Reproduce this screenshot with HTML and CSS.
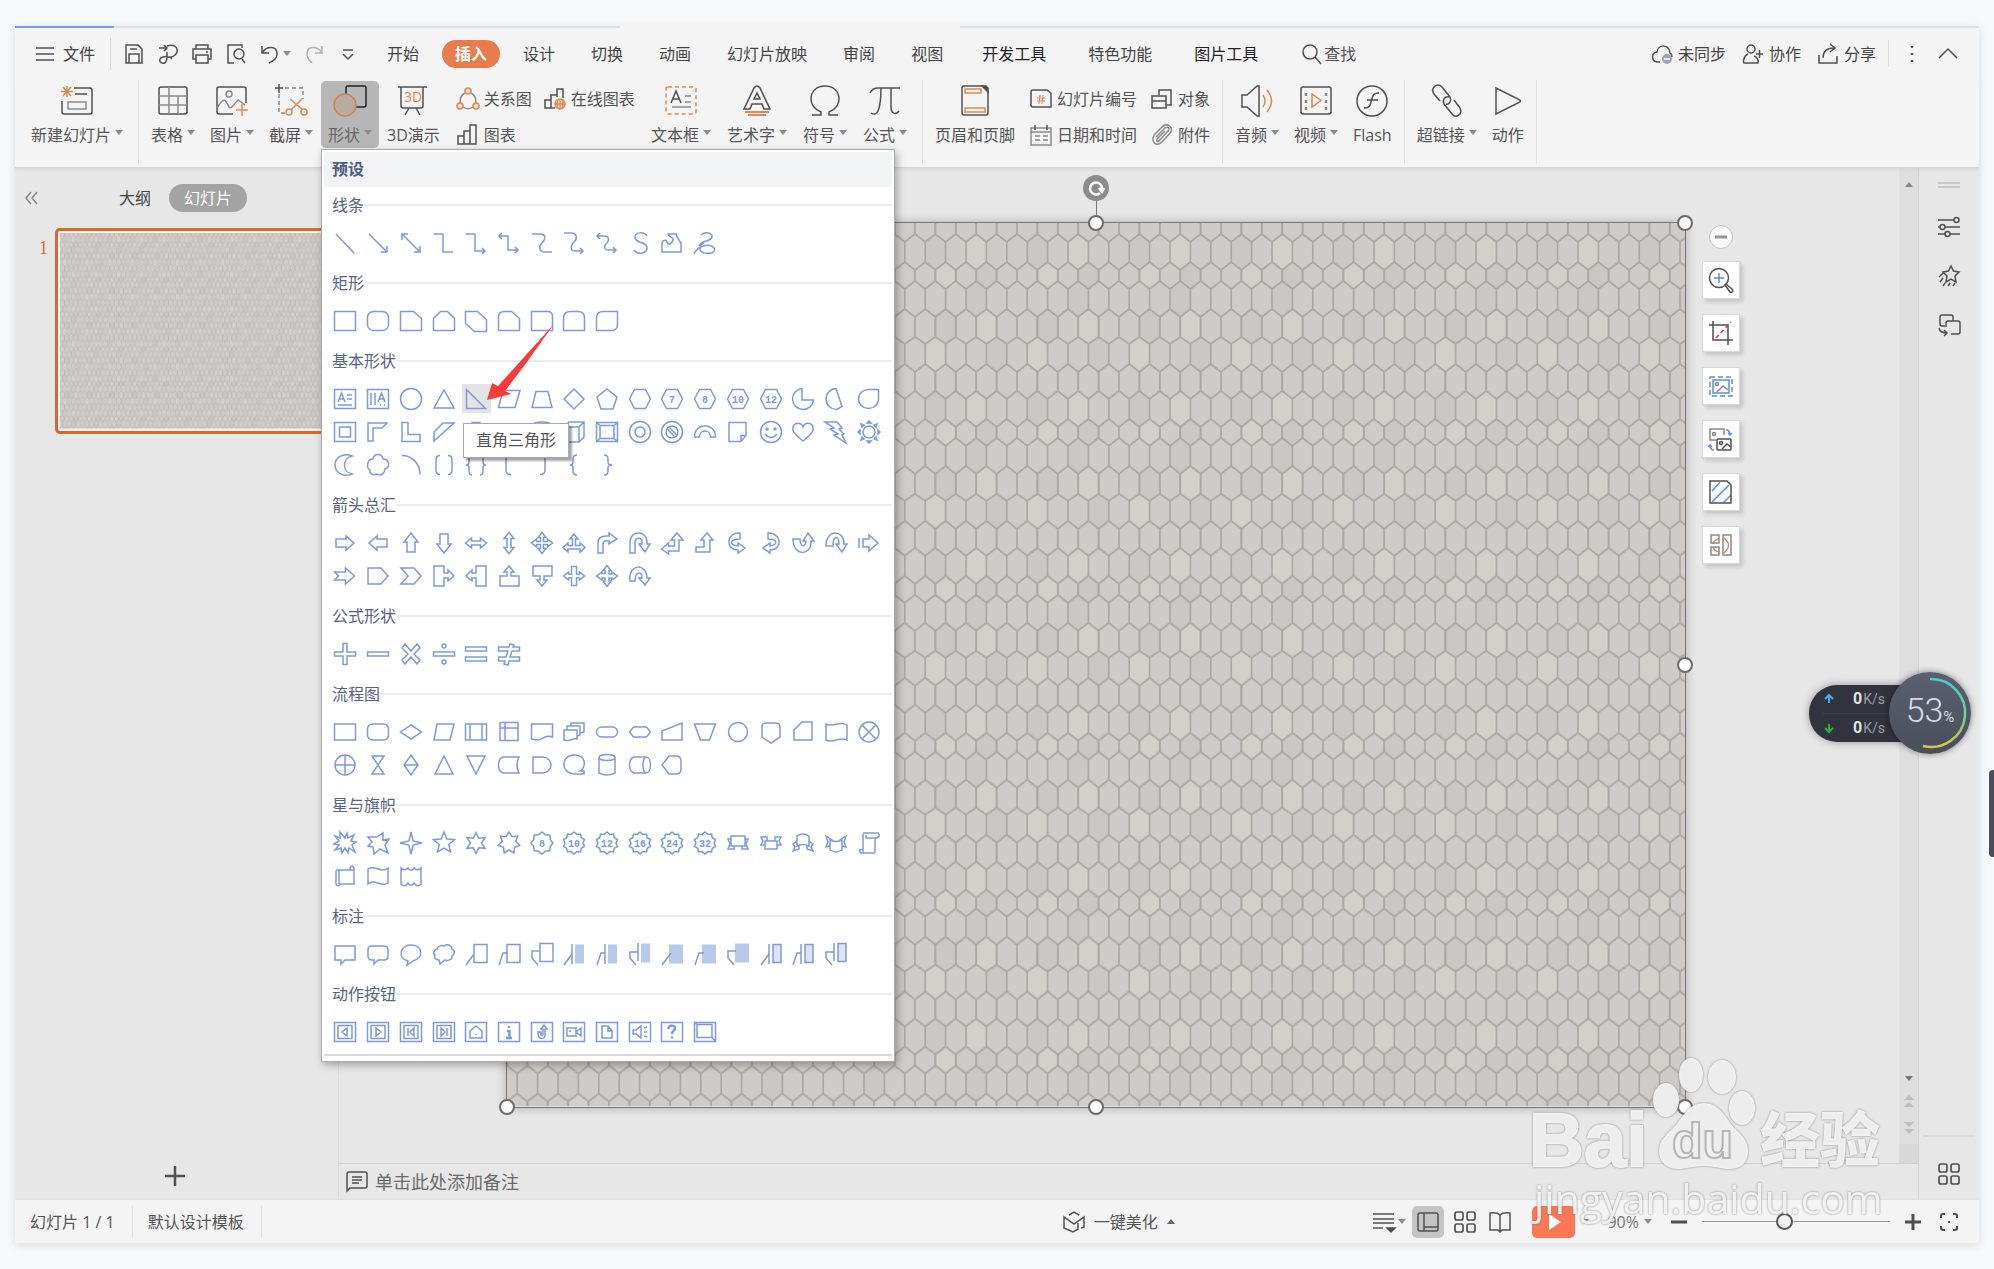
FILE: index.html
```html
<!DOCTYPE html>
<html lang="zh-CN">
<head>
<meta charset="utf-8">
<title>演示</title>
<link rel="stylesheet" href="styles.css">
</head>
<body>
<svg class="defs" aria-hidden="true">
  <defs>
    <pattern id="tiles" width="102" height="157" patternUnits="userSpaceOnUse">
      <rect width="102" height="157" fill="#cfcbc8"/>
      <path fill="#cbc7c4" d="M10.2 19l10.2-8 10.2 8v20l-10.2 8-10.2-8zM61.2 47l10.2-8 10.2 8v11l-10.2 8-10.2-8zM51 66l10.2-8 10.2 8v20l-10.2 8-10.2-8zM71.4 121l10.2-7 10.2 7v20l-10.2 8-10.2-8zM20.4 94l10.2-8 10.2 8v20l-10.2 7-10.2-7z"/>
      <path fill="#d3cfcb" d="M51 19l10.2-8 10.2 8v20l-10.2 8-10.2-8zM20.4 47l10.2-8 10.2 8v11l-10.2 8-10.2-8zM61.2 94l10.2-8 10.2 8v20l-10.2 7-10.2-7zM10.2 121l10.2-7 10.2 7v20l-10.2 8-10.2-8z"/>
      <g id="cells" fill="none" stroke="#aaa5a1" stroke-width="1.7">
        <path id="cell" d="M0 0v11l10.2 8v20L0 47v11l10.2 8v20L0 94v20l10.2 7v20L0 149v8M20.4 0v11l-10.2 8M10.2 39l10.2 8v11l-10.2 8M10.2 86l10.2 8v20l-10.2 7M10.2 141l10.2 8v8"/>
        <use href="#cell" x="20.4"/><use href="#cell" x="40.8"/><use href="#cell" x="61.2"/><use href="#cell" x="81.6"/>
      </g>
    </pattern>
    <symbol id="slide-art" viewBox="0 0 1178 884" preserveAspectRatio="none"><rect width="1178" height="884" fill="url(#tiles)"/></symbol>
    <symbol id="four" viewBox="0 0 24 24"><g fill="none" stroke="currentColor" stroke-width="1.7"><rect x="2" y="2" width="8" height="8" rx="2"/><rect x="14" y="2" width="8" height="8" rx="2"/><rect x="2" y="14" width="8" height="8" rx="2"/><rect x="14" y="14" width="8" height="8" rx="2"/></g></symbol>
  </defs>
</svg>

<div class="window">
  <div class="doc-tabs"><span class="doc-tab current"></span><span class="doc-tab"></span><span class="doc-gap"></span><span class="doc-rest"></span></div>

  <header class="menu-bar">
    <button class="file-menu"><svg class="i20" viewBox="0 0 20 20"><path d="M1 4h18M1 10h18M1 16h18"/></svg>文件</button>
    <div class="quick">
      <button><svg class="i22" viewBox="0 0 22 22"><path d="M3 2h12l4 4v14H3zM6 20v-9h10v9M7 6h7"/></svg></button>
      <button><svg class="i22" viewBox="0 0 22 22"><path d="M2 5h8M7 2l3 3-3 3M10 3c7-2 11 1 10 6-1 4-6 6-10 5v-5M10 14c0 5-2 7-5 6-4-1-2-6 1-6 3-1 8 0 9 2"/></svg></button>
      <button><svg class="i22" viewBox="0 0 22 22"><path d="M5 6V2h12v4M5 16H2V6h18v10h-3M5 12h12v8H5zM15 9h2"/></svg></button>
      <button><svg class="i22" viewBox="0 0 22 22"><path d="M9 20H3V2h14v3M17 16l3 4"/><circle cx="14" cy="11" r="5"/></svg></button>
      <button class="undo"><svg class="i22" viewBox="0 0 22 22"><path d="M3 3v7h7M3 10c4-7 15-8 15 1 0 5-4 7-8 9"/></svg><i class="caret"></i></button>
      <button class="faint"><svg class="i22" viewBox="0 0 22 22"><path d="M19 3v7h-7M19 10c-4-7-15-8-15 1 0 5 3 7 5 9"/></svg></button>
      <button><svg class="i22" viewBox="0 0 22 22"><path d="M6 7h10M6 11l5 5 5-5"/></svg></button>
    </div>
    <nav class="tabs">
      <a href="#">开始</a><a href="#" class="on">插入</a><a href="#">设计</a><a href="#">切换</a><a href="#">动画</a><a href="#">幻灯片放映</a><a href="#">审阅</a><a href="#">视图</a><a href="#" class="wide dark">开发工具</a><a href="#" class="wide">特色功能</a><a href="#" class="wide dark">图片工具</a>
    </nav>
    <button class="search"><svg class="i22" viewBox="0 0 22 22"><circle cx="9" cy="9" r="7"/><path d="M14 14l6 7"/></svg>查找</button>
    <div class="account">
      <button><svg class="i22" viewBox="0 0 22 22"><path d="M9 19H6c-6-1-6-9 0-10 1-8 12-8 13 1 2 1 2 2 2 4"/><circle cx="16" cy="16" r="5" fill="#9aa3b8" stroke="none"/><path d="M13 16h6" stroke="#fff"/></svg>未同步</button>
      <button><svg class="i22" viewBox="0 0 22 22"><circle cx="9" cy="6" r="4"/><path d="M6 11c-5 2-5 9-4 9h14c1-3-1-6-4-7M14 11h7M17.500 7v8"/></svg>协作</button>
      <button><svg class="i22" viewBox="0 0 22 22"><path d="M2 12v8h18v-7M6 15c0-7 4-10 11-10M13 1l5 4-5 4"/></svg>分享</button>
      <span class="bar"></span>
      <button class="dots"><svg class="i22" viewBox="0 0 22 22"><path d="M11 3v2M11 10v2M11 17v2" stroke-width="2.500"/></svg></button>
      <button><svg class="i22" viewBox="0 0 22 22"><path d="M2 15l9-9 9 9"/></svg></button>
    </div>
  </header>

  <div class="tools">
    <div class="group">
      <button class="big"><svg viewBox="0 0 32 32"><path d="M13 3h16q2 0 2 2v22q0 2-2 2H3q-2 0-2-2V16M14 9h12"/><path class="g" d="M7 17h18v7H7z"/><path class="o" d="M6 1v11M0 6.500h12M2 2l8 9M10 2l-8 9"/></svg><span>新建幻灯片<i class="caret"></i></span></button>
    </div>
    <div class="group">
      <button class="big"><svg viewBox="0 0 32 32"><rect x="2" y="2" width="28" height="27" rx="2"/><path class="g" d="M2 11h28M2 20h28M12 2v27M21 11v18"/></svg><span>表格<i class="caret"></i></span></button>
      <button class="big"><svg viewBox="0 0 32 32"><path d="M30 18V4q0-2-2-2H3q-2 0-2 2v23q0 2 2 2h14"/><path class="g" d="M1 23c8-14 9-6 12-1 3 3 6-5 9-7l7 5"/><circle class="g" cx="13" cy="9" r="3"/><path class="o" d="M26 19v12M20 25h12"/></svg><span>图片<i class="caret"></i></span></button>
      <button class="big"><svg viewBox="0 0 32 32"><path stroke-dasharray="4 3" class="g" d="M10 3h18v11M4 9v19h7"/><path d="M4-1v9M0 3h8"/><path class="o" d="M15 14l13 11M27 14L16 25"/><circle class="o" cx="14" cy="27" r="3"/><circle class="o" cx="29" cy="27" r="3"/></svg><span>截屏<i class="caret"></i></span></button>
      <div class="menu-anchor">
        <button class="big pressed"><svg viewBox="0 0 32 32"><rect x="12" y="1" width="20" height="21" rx="2" stroke="#222"/><circle cx="11" cy="20" r="11" stroke="#d5814c" fill="#b9aaa2"/></svg><span>形状<i class="caret"></i></span></button>
        <div class="gallery">
          <h2>预设</h2>
          <div id="gallery-groups"></div>
        </div>
      </div>
      <button class="big"><svg viewBox="0 0 32 32"><path d="M1 2h29M4 2v19q0 2 2 2h18q2 0 2-2V2M12 23l-4 7M19 23l4 7"/><text x="7" y="17" class="svg-3d">3D</text></svg><span>3D演示</span></button>
      <div class="small-grid charts">
        <button class="small"><svg class="i22" viewBox="0 0 22 22"><path class="g" d="M8 5C2 8 3 15 4 16M14 5c6 3 5 10 4 11M6 19c3 2 7 2 10 0"/><g class="o" fill="#f6dccb"><circle cx="11" cy="3" r="3"/><circle cx="3" cy="18" r="3"/><circle cx="19" cy="18" r="3"/></g></svg>关系图</button>
        <button class="small"><svg class="i22" viewBox="0 0 22 22"><path d="M1 20V12h6v8zM7 20V7h6M13 9V1h6v9M7 20h4"/><circle class="o" cx="16" cy="16" r="5"/><path class="o" d="M16 11v10M11 16h10M14 12q-2 4 0 8M18 12q2 4 0 8"/></svg>在线图表</button>
        <button class="small"><svg class="i22" viewBox="0 0 22 22"><path d="M1 20V12h6v8zM7 20V7h6v13zM13 20V1h6v19z"/></svg>图表</button>
      </div>
      <div class="cluster">
      <button class="big"><svg viewBox="0 0 32 32"><rect class="o" x="1" y="2" width="30" height="27" rx="2" stroke-dasharray="4 3"/><path d="M6 18l5-12 5 12M8 14h6"/><path class="g" d="M20 11h6M20 17h6M7 22h19"/></svg><span>文本框<i class="caret"></i></span></button>
      <button class="big"><svg viewBox="0 0 32 32"><path d="M3 24L13 3q3-4 6 0l10 21h-6l-2-5H11l-2 5zM16 8l-3 6h6z"/><path class="o" d="M4 27h24M7 30h18" stroke-width="2"/></svg><span>艺术字<i class="caret"></i></span></button>
      <button class="big"><svg viewBox="0 0 32 32"><path d="M3 30h9v-3C5 24 2 19 2 14 2 6 8 1 16 1s14 5 14 13c0 5-3 10-10 13v3h9"/></svg><span>符号<i class="caret"></i></span></button>
      <button class="big"><svg viewBox="0 0 32 32"><path d="M1 8c2-4 4-5 8-5h22M12 3c0 9 0 16-3 23-1 3-4 4-7 2M22 3v19c0 7 5 8 8 4"/></svg><span>公式<i class="caret"></i></span></button>
      </div>
    </div>
    <div class="group">
      <button class="big"><svg viewBox="0 0 32 32"><path d="M3 3q0-2 2-2h19l5 5v22q0 2-2 2H5q-2 0-2-2z"/><path d="M23 1l6 6v-4l-2-2z" fill="#444"/><path class="o" d="M6 4h16v4H6zM6 23h20v4H6z"/></svg><span>页眉和页脚</span></button>
      <div class="small-grid">
        <button class="small"><svg class="i22" viewBox="0 0 22 22"><path d="M1 4q0-2 2-2h14l4 3v14H3q-2 0-2-2z"/><path class="o" stroke-width="1" d="M7 10h8M7 13h8M10 7l-1 9M13 7l-1 9"/></svg>幻灯片编号</button>
        <button class="small"><svg class="i22" viewBox="0 0 22 22"><path d="M8 7V2h12v15h-5M1 8h14v12H1zM1 13h14"/></svg>对象</button>
        <button class="small"><svg class="i22" viewBox="0 0 22 22"><path class="g" d="M1 4h20v17H1zM1 8h20M5 12h5M13 12h5M5 16h5M13 16h5"/><path d="M5 1v5M17 1v5"/></svg>日期和时间</button>
        <button class="small"><svg class="i22" viewBox="0 0 22 22"><path class="g" d="M5 13l9-9c3-2 5 0 3 3L8 17c-2 1-3 0-2-2l8-8M3 11l9-9c5-3 10 1 8 6l-9 10c-6 5-11 1-8-7"/></svg>附件</button>
      </div>
    </div>
    <div class="group">
      <button class="big"><svg viewBox="0 0 32 32"><path d="M1 10h5L16 1h2v30h-2L6 22H1z"/><path class="o" d="M22 10q4 6 0 12M26 5q9 11 0 22"/></svg><span>音频<i class="caret"></i></span></button>
      <button class="big"><svg viewBox="0 0 32 32"><rect x="1" y="2" width="30" height="27" rx="2"/><path class="g" stroke-width="2.500" stroke-dasharray="3 4" d="M6 8v18M26 8v18"/><path class="o" d="M12 9l9 6.500-9 6.500z"/></svg><span>视频<i class="caret"></i></span></button>
      <button class="big"><svg viewBox="0 0 32 32"><circle cx="16" cy="16" r="15"/><path d="M23 8c-6 0-6 2-8 9-1 5-3 6-7 6M11 15h11"/></svg><span>Flash</span></button>
    </div>
    <div class="group">
      <button class="big"><svg viewBox="0 0 32 32"><path d="M9 16L3 9c-4-6 3-12 8-7l8 10c2 4-1 8-4 7M23 15l6 8c3 6-4 11-8 6l-8-10c-2-4 1-8 5-7"/></svg><span>超链接<i class="caret"></i></span></button>
      <button class="big"><svg viewBox="0 0 32 32"><path d="M4 3v26l24-12q1-1 0-2z"/></svg><span>动作</span></button>
    </div>
  </div>

  <div class="work">
    <aside class="slides">
      <div class="slides-head">
        <button class="fold"><svg class="i14" viewBox="0 0 14 14"><path d="M7 1L2 7l5 6M13 1L8 7l5 6"/></svg></button>
        <button class="outline">大纲</button>
        <button class="thumbs">幻灯片</button>
      </div>
      <div class="thumb-row">
        <span class="num">1</span>
        <div class="thumb"><svg viewBox="0 0 1178 884" preserveAspectRatio="none"><use href="#slide-art" width="1178" height="884"/></svg></div>
      </div>
      <button class="add"><svg class="i22" viewBox="0 0 22 22"><path d="M11 1v20M1 11h20" stroke-width="2.500"/></svg></button>
    </aside>

    <main class="main">
      <div class="stage-row">
        <div class="stage">
          <div class="slide">
            <svg class="art" viewBox="0 0 1178 884" preserveAspectRatio="none"><use href="#slide-art" width="1178" height="884"/></svg>
            <i class="stem"></i>
            <i class="spin"><svg class="i18" viewBox="0 0 18 18"><path d="M13 14A6 6 0 1 1 15 9v3M12 9l3 4 2-4" stroke="#fff" stroke-width="2.500"/></svg></i>
            <i class="knob tl"></i><i class="knob tc"></i><i class="knob tr"></i><i class="knob mr"></i><i class="knob bl"></i><i class="knob bc"></i><i class="knob br"></i>
            <div class="pic-tools">
              <button class="round"><svg class="i14" viewBox="0 0 14 14"><path d="M1 7h12" stroke="#999" stroke-width="3"/></svg></button>
              <button><svg class="i26" viewBox="0 0 26 26"><circle cx="11" cy="11" r="9.500"/><path d="M17 18l1-1 7 6q0 3-3 2z"/><path class="b" d="M6 11h10M11 6v10"/></svg></button>
              <button><svg class="i26" viewBox="0 0 26 26"><path d="M1 5h19v20M5 1v19h20"/><path d="M8 18L23 2" stroke="#e33" stroke-dasharray="4 3"/></svg></button>
              <button><svg class="i26" viewBox="0 0 26 26"><rect class="b" x="2" y="4" width="22" height="19" stroke-dasharray="5 3"/><rect class="b" x="5" y="7" width="16" height="13"/><circle class="g" cx="9" cy="11" r="1.500"/><path class="g" d="M9 19l6-6 5 4"/></svg></button>
              <button><svg class="i26" viewBox="0 0 26 26"><path class="g" d="M8 14H2V3h14v6"/><circle class="g" cx="6" cy="8" r="1.500"/><rect x="9" y="13" width="14" height="11" rx="1"/><circle cx="13" cy="17" r="1.500"/><path d="M14 23l5-5 4 3"/><path class="b" d="M18 4q4 0 4 5m-2-2l2 2 2-2M6 24q-4 0-4-5m-2 2l2-2 2 2"/></svg></button>
              <button><svg class="i26" viewBox="0 0 26 26"><path class="b" d="M4 12L12 3M4 23L21 6M15 24l8-8"/><path d="M2 2h17l4 4v18H2z"/></svg></button>
              <button><svg class="i26" viewBox="0 0 26 26"><path class="o" d="M11 7q-5 1-6 5M11 20q-5-1-6-5M16 6q9 7 0 15"/><path class="g" d="M3 3h8v8H3zM3 15h8v8H3zM15 3h8v20h-8z"/></svg></button>
            </div>
          </div>
        </div>
        <div class="scroll"><i class="up"></i><span class="scroll-foot"><i class="down"></i><svg class="i14" viewBox="0 0 14 14"><path d="M2 6l5-5 5 5zM2 13l5-5 5 5z"/></svg><svg class="i14" viewBox="0 0 14 14"><path d="M2 1l5 5 5-5zM2 8l5 5 5-5z"/></svg></span><span class="corner"></span></div>
      </div>
      <label class="notes"><svg class="i22" viewBox="0 0 22 22"><path d="M1 20V3q0-2 2-2h16q2 0 2 2v12q0 2-2 2H4zM6 6h10M6 9h10M6 12h7"/></svg><input type="text" placeholder="单击此处添加备注"></label>
    </main>

    <aside class="side">
      <i class="grip"></i>
      <button><svg class="i22" viewBox="0 0 22 22"><path d="M0 4h16M7 11h15M0 11h2M0 18h7M12 18h10"/><circle cx="18.500" cy="4" r="2.500"/><circle cx="4.500" cy="11" r="2.500"/><circle cx="9.500" cy="18" r="2.500"/></svg></button>
      <button><svg class="i22" viewBox="0 0 22 22"><path d="M13 1l2.500 5 5.500 1-4 4 1 6-5-3-5 3 1-6-4-4 5.500-1zM5 8l-4 4M5 13l-3 4M7 18l-2 3M12 18l-2 3M17 18l-2 3"/></svg></button>
      <button><svg class="i22" viewBox="0 0 22 22"><path d="M7 12H4q-2 0-2-2V3q0-2 2-2h9q2 0 2 2v4M8 9q0-2 2-2h10q2 0 2 2v9q0 2-2 2h-7M8 9v4M1 14q1 5 8 5m-3-3l3 3-3 3"/></svg></button>
      <button class="apps"><svg class="i24"><use href="#four"/></svg></button>
    </aside>
  </div>

  <footer class="status">
    <span class="cell">幻灯片 1 / 1</span><span class="cell">默认设计模板</span>
    <button class="beautify"><svg class="i22" viewBox="0 0 22 22"><path d="M6 4l5-3 5 3M18 17l3-1V6l-10 7L1 6v11l9 4 5-3v-6"/></svg>一键美化<i class="caret flip"></i></button>
    <div class="views">
      <button class="remarks"><svg class="i22" viewBox="0 0 22 22"><path d="M0 3h21M0 8h21M0 12h21M0 17h10"/><path d="M14 17h8l-4 4z" fill="#444"/></svg><i class="caret"></i></button>
      <button class="picked"><svg class="i22" viewBox="0 0 22 22"><rect x="1" y="2" width="20" height="18" rx="2"/><path d="M7 2v18M7 16h14"/></svg></button>
      <button><svg class="i24"><use href="#four"/></svg></button>
      <button class="reading"><svg class="i22" viewBox="0 0 22 22"><path d="M11 4v17M11 4Q8 1 1 2v17h8l2 2 2-2h8V2q-7-1-10 2"/></svg></button>
      <button class="play"><svg class="i18" viewBox="0 0 18 18"><path d="M4 1v16l12-8z" fill="#fff" stroke="none"/></svg></button>
      <i class="caret play-more"></i>
      <button class="zoom">90%<i class="caret"></i></button>
      <button><svg class="i18" viewBox="0 0 18 18"><path d="M1 9h16" stroke-width="3"/></svg></button>
      <input type="range" min="0" max="100" value="43" aria-label="缩放">
      <button><svg class="i18" viewBox="0 0 18 18"><path d="M1 9h16M9 1v16" stroke-width="3"/></svg></button>
      <button class="fit"><svg class="i18" viewBox="0 0 18 18"><path d="M1 5V3q0-2 2-2h2M13 1h2q2 0 2 2v2M17 13v2q0 2-2 2h-2M5 17H3q-2 0-2-2v-2M8 9h2" stroke-width="2"/></svg></button>
    </div>
  </footer>
</div>

<div class="meter">
  <div class="rates">
    <p><svg class="i14" viewBox="0 0 14 14"><path d="M7 11V3M3 7l4-4 4 4" stroke="#3fb0f0" stroke-width="2"/></svg><b>0</b>K/s</p>
    <p><svg class="i14" viewBox="0 0 14 14"><path d="M7 3v8M3 7l4 4 4-4" stroke="#2fae3c" stroke-width="2"/></svg><b>0</b>K/s</p>
  </div>
  <div class="dial">
    <svg viewBox="0 0 82 82"><defs><linearGradient id="arc" x2="0" y2="1"><stop offset="0" stop-color="#45cfd0"/><stop offset=".6" stop-color="#7ad08c"/><stop offset="1" stop-color="#d6c84a"/></linearGradient></defs><path d="M41 7a34 34 0 1 1-7 67" stroke="url(#arc)" stroke-width="2.500"/></svg>
    <span class="pct">53<small>%</small></span>
  </div>
</div>
<i class="edge-tab"></i>

<svg class="watermark" viewBox="0 0 370 180">
  <g class="wm-fill">
    <text x="4" y="116" class="wm-latin">Bai</text>
    <ellipse cx="141" cy="50" rx="13" ry="17"/><ellipse cx="166" cy="25" rx="12" ry="17"/><ellipse cx="197" cy="27" rx="14" ry="17"/><ellipse cx="217" cy="58" rx="13" ry="17"/>
    <path d="M179 53c13 0 20 11 27 21 8 10 17 14 17 27 0 14-10 19-22 18-8-1-13-3-22-3s-15 2-23 3c-12 1-22-5-22-18 0-12 9-17 18-27 7-10 14-21 27-21z"/>
    <text x="235" y="112" class="wm-cjk">经验</text>
    <text x="9" y="164" class="wm-url">jingyan.baidu.com</text>
  </g>
  <text x="147" y="108" class="wm-du">du</text>
</svg>
<script src="gallery.js"></script>
</body>
</html>
```
FILE: gallery.js
```js
// Shape gallery: each entry is either SVG path data or ready SVG markup on a 24x24 grid.
const star = (n, outer, inner) => {
  let d = '';
  for (let i = 0; i < n * 2; i++) {
    const r = i % 2 ? inner : outer, a = Math.PI * i / n - Math.PI / 2;
    d += (i ? 'L' : 'M') + (12 + r * Math.cos(a)).toFixed(1) + ' ' + (12 + r * Math.sin(a)).toFixed(1);
  }
  return d + 'z';
};
const path = d => `<path d="${d}"/>`;
const num = (shape, t) => path(shape) + `<text x="12" y="16">${t}</text>`;
const HEX = 'M1.5 12l5-9.500h11l5 9.500-5 9.500h-11z';
const FRAME = 'M1.5 2.500h21v19h-21z';
const BEVEL = FRAME + 'M5 5.500h14v13H5z';

const groups = [
  ['线条', [
    'M3 3l18 19', 'M3 3l18 18m0-6v6h-6', 'M3 3l18 18m0-6v6h-6M3 9V3h6', 'M2 3h9v18h10',
    'M2 3h9v17h10m-3-3l3 3-3 3', 'M2 5h9v14h10m-3-3l3 3-3 3M5 2L2 5l3 3',
    'M2 3h8c7 0 5 6 2 9-3 2-4 9 3 9h7', 'M2 2h7c7 0 6 7 3 9-3 3-5 9 2 9h7m-3-3l3 3-3 3',
    'M2 5h7c6 0 5 5 3 7-3 2-4 7 2 7h7m-3-3l3 3-3 3M5 2L2 5l3 3',
    'M19 5c-3-5-13-4-12 2 1 5 11 4 12 9 1 6-9 9-13 3',
    'M2 21V12c1-3 4-4 5-1 1 4 5 2 6-2 1-3-4-2-5-6h8c1 4 3 6 5 9v9z',
    'M8 4c5-4 12-2 11 2-1 5-11 3-13 9M1 23c4-9 16-11 20-6 2 5-4 6-10 5-6-2-5-8 0-10']],
  ['矩形', [
    FRAME, '<rect x="1.500" y="2.500" width="21" height="19" rx="6"/>',
    'M1.5 2.500h13l8 7v12h-21z', 'M1.5 21.500v-12l7-7h7l7 7v12z', 'M1.5 2.500h12l9 8v12h-12l-9-8z',
    'M1.5 21.500V8q0-5.500 6-5.500h7l8 7v12z', 'M1.5 2.500h16q5 0 5 5v14h-21z',
    'M1.5 21.500V9q0-6.500 7-6.500h7q7 0 7 6.500v12.500z', 'M1.5 21.500V9q0-6.500 7-6.500h14V15q0 6.500-6 6.500z']],
  ['基本形状', [
    FRAME + 'M5 15l3.500-9 3.500 9M6 12h5M14 8h5M14 12h5M5 18h14', FRAME + 'M5 6v12M9 6v12M12 15l3.500-9 3.500 9M13 12h5M14 18h1M18 18h1',
    '<circle cx="12" cy="12" r="10.500"/>', 'M12 3l10 18H2z', 'M2.5 2.500v19h19z', 'M6 3.500h17l-5 17H1.500z',
    'M6 4.500h12l4 16H2z', 'M12 2l10 10-10 10L2 12z', 'M12 2l10 8-4 12H6L2 10z', HEX,
    num(HEX, '7'), num(HEX, '8'), num(HEX, '10'), num(HEX, '12'),
    'M11 1.500a10.500 10.500 0 1 0 11.500 11.500H11z', 'M12 1.500a10.500 10.500 0 0 0 1 21l5-3z', 'M21.5 2.500H12a10 9.500 0 1 0 9.500 9.500z',
    FRAME + 'M6.500 7h11v10h-11z', 'M2 21V3h19l-5 5H7v13z', 'M3 2.500h6v12h12v7H3z', 'M2 21v-9l9-9h11z',
    'M8 2.500h8v5h5v9h-5v5H8v-5H3v-9h5z', 'M3 4h18v16H3z', '<ellipse cx="12" cy="5" rx="9" ry="3"/><path d="M3 5v14q9 5 18 0V5"/>',
    'M2 7l5-5h15v15l-5 5H2zM2 7h15v15M17 7l5-5', BEVEL + 'M1.5 2.500l3.500 3M22.500 2.500l-3.500 3M1.500 21.500l3.500-3M22.500 21.500l-3.500-3',
    '<circle cx="12" cy="12" r="10.500"/><circle cx="12" cy="12" r="5"/>', '<circle cx="12" cy="12" r="10.500"/><circle cx="12" cy="12" r="6"/><path d="M7 9l8 8M9 7l8 8"/>',
    'M1.5 17C1.500 2 22.500 2 22.500 17h-5c0-8-11-8-11 0z', 'M3 2.500h17v13l-5 6H3zM20 15.500h-5v6',
    '<circle cx="12" cy="12" r="10.500"/><circle cx="8" cy="9" r="1"/><circle cx="16" cy="9" r="1"/><path d="M6 14q6 7 12 0"/>',
    'M12 21C2 13 1 10 2 7c2-5 8-5 10 0 2-5 8-5 10 0 1 3 0 6-10 14z', 'M1 2h12l5 6-3 1 5 5-2 1 4 8-12-8 4-1-8-5 4-1z',
    '<circle cx="12" cy="12" r="6"/><path d="M12 1l2 2h-4zM12 23l2-2h-4zM1 12l2-2v4zM23 12l-2-2v4zM4 4l3 1-2 2zM20 4l-3 1 2 2zM4 20l3-1-2-2zM20 20l-3-1 2-2z"/>',
    'M19 3C10-1 2 5 2 12s8 13 17 9C9 19 9 5 19 3z', 'M7 6c1-6 9-6 10 0 7 0 7 9 2 10-1 6-5 7-8 5-5 2-8-1-7-4C0 15 1 6 7 6z',
    'M3 2.500c10 0 18 8 18 19', 'M8 2.500Q4 2.500 4 7v10q0 4.500 4 4.500M16 2.500q4 0 4 4.500v10q0 4.500-4 4.500',
    'M8 2Q5 2 5 6v3q0 3-3 3 3 0 3 3v3q0 4 3 4M16 2q3 0 3 4v3q0 3 3 3-3 0-3 3v3q0 4-3 4', 'M14 2.500Q9 2.500 9 7v10q0 4.500 5 4.500',
    'M10 2.500q5 0 5 4.500v10q0 4.500-5 4.500', 'M15 2q-4 0-4 4v3q0 3-3 3 3 0 3 3v3q0 4 4 4', 'M9 2q4 0 4 4v3q0 3 4 3-4 0-4 3v3q0 4-4 4']],
  ['箭头总汇', [
    'M3 8h10V5l8 7-8 7v-3H3z', 'M21 8H11V5l-8 7 8 7v-3h10z', 'M8 21V11H5l7-9 7 9h-3v10z', 'M8 3v10H5l7 9 7-9h-3V3z',
    'M1.500 12l6-5v3h9V7l6 5-6 5v-3h-9v3z', 'M12 1.500l-5 6h3v9H7l5 6 5-6h-3v-9h3z',
    'M12 1.500l-4 5h2.500v4H6.500V8l-5 4 5 4v-2.500h4v4H8l4 5 4-5h-2.500v-4h4V16l5-4-5-4v2.500h-4v-4H16z',
    'M12 3L8 8h2.500v6.500H6V12l-5 4.500L6 21v-3h12v3l5-4.500L18 12v2.500h-4.500V8H16z',
    'M3 22V12q0-7 8-7h3V2l8 6-8 5v-3h-3q-3 0-3 3v9z', 'M2 22V11C2-1 19-1 19 11v2h3l-5 8-6-8h3v-2c0-5-7-5-7 0v11z',
    'M1.500 18l7-6v3h6V9H11l6-7 6 7h-4v11H8.500v3z', 'M3 21v-5h8V9H8l6-7 6 7h-3v12z',
    'M14 2C0 1-1 19 12 19v3l7-5-7-5v3C2 14 4 8 14 8zM14 8V2', 'M9 2c14 0 15 17 2 17v3l-7-5 7-5v3c8-1 8-7-2-7zM9 8V2',
    'M2 8c0 18 19 17 18 2h3l-6-8-5 8h3c0 6-6 7-6-2zM2 8h7', 'M2 15C2-2 20-2 20 13h3l-5 8-6-8h3c0-9-6-9-6 2zM2 15h7',
    'M2 7v10M6 8v8h6v4l9-8-9-8v4z', 'M1.500 8h11V4l9 8-9 8v-4h-11l4-4z', 'M2 4h13l7 8-7 8H2z', 'M2 4h13l7 8-7 8H2l7-8z',
    'M2 2h10v7h4V6l6 6-6 5v-3h-4v8H2z', 'M22 2H12v7H8V6l-6 6 6 5v-3h4v8h10z', 'M3 22V12h7V8H7l5-6 5 6h-3v4h8v10z', 'M3 2v10h7v4H7l5 6 5-6h-3v-4h8V2z',
    'M1.500 12l5-4v2h3V2.500h5V10h3V8l5 4-5 4v-2h-3v7.500h-5V14h-3v2z',
    'M12 1.500l-4 5h2v3H7V8l-5.500 4L7 16v-2h3v3H8l4 5.500 4-5.500h-2v-3h3v2l5.500-4L17 8v2h-3V6.500h2z',
    'M2 17C0-1 19-1 19 14h3l-5 7-6-7h3c0-8-7-6-7 3z']],
  ['公式形状', [
    'M10 1.500h4V10h8.500v4H14v8.500h-4V14H1.500v-4H10z', 'M1.500 10h21v4h-21z', 'M6 2l6 7 6-7 3 4-6 6 6 6-3 4-6-7-6 7-3-4 6-6-6-6z',
    '<path d="M1.500 10h21v4h-21z"/><circle cx="12" cy="4" r="2"/><circle cx="12" cy="20" r="2"/>', 'M1.500 5h21v4h-21zM1.500 15h21v4h-21z',
    'M1.500 5H12l1-3 4 1-1 2h6.500v4H15l-2 6h9.500v4H12l-1 4-4-1 1-3H1.500v-4H9l2-6H1.500z']],
  ['流程图', [
    'M1.500 4h21v16h-21z', '<rect x="1.500" y="4" width="21" height="16" rx="5"/>', 'M1.500 12L12 5l10.500 7L12 19z', 'M5 4h17l-4 16H2z',
    'M1.500 4h21v16h-21zM6 4v16M18 4v16', 'M3 2.500h18v18H3zM8 2.500v18M3 8h18', 'M1.500 4h21v13c-8-3-10 3-14 3-3 0-5 0-7-1z',
    'M2 10h13v9c-6-1-6 3-13 1zM5 10V6h13v9l-3 1M9 6V3h13v9l-4 1', '<rect x="1.500" y="7" width="21" height="10" rx="5"/>',
    'M1.500 12l4-5h13l4 5-4 5h-13z', 'M2 11l20-8v17H2z', 'M1.500 4h21l-6 16h-9z', '<circle cx="12" cy="12" r="9.500"/>',
    'M3 17V7q0-4 4-4h10q4 0 4 4v10l-9 6z', 'M3 10l8-8h10v18H3z', 'M2 4c7 4 14-4 21 1v15c-7-4-14 4-21 0z',
    '<circle cx="12" cy="12" r="10"/><path d="M5 5l14 14M19 5L5 19"/>', '<circle cx="12" cy="12" r="10"/><path d="M12 2v20M2 12h20"/>',
    'M6 3h12L6 21h12z', 'M12 2l7 10-7 10-7-10zM5 12h14', 'M12 3l9 18H3z', 'M12 21l9-18H3z', 'M6 4h16q-4 8 0 16H6C0 18 0 6 6 4z',
    'M3 4h9c12 0 12 16 0 16H3z', 'M22 21H12C-2 20-1 2 12 2s12 12 6 16h4z',
    '<ellipse cx="12" cy="4.500" rx="8" ry="3"/><path d="M4 4.500V20q8 4 16 0V4.500"/>', 'M18 4H6C0 6 0 18 6 20h12M18 4c6 0 6 16 0 16-4-2-4-14 0-16z',
    'M2 12l7-9h7q5 0 5 5v8q0 5-5 5H9z']],
  ['星与旗帜', [
    'M12 7l2-5 1 5 6-3-3 6 5 1-4 3 3 7-6-4-1 5-3-5-3 5-1-5-6 2 4-5-5-1 5-3-4-5 5 2V1z', 'M11 6l6-4 0 7 6-1-4 6 3 8-8-4-6 5-1-7-5-1 4-4-4-5 7 0z', star(4, 11, 3), star(5, 11, 5), star(6, 10.500, 5.500), star(7, 11, 7),
    num(star(8, 11, 9), '8'), num(star(10, 11, 9), '10'), num(star(10, 11, 9), '12'), num(star(10, 11, 9), '16'), num(star(10, 11, 9), '24'), num(star(10, 11, 9), '32'),
    'M5 5h14v10H5zM5 8H2l2 5-2 5h6v-3M19 8h3l-2 5 2 5h-6v-3', 'M6 10h12v8H6zM6 14H2l2-4-2-4h6v4M18 14h4l-2-4 2-4h-6v4',
    'M6 5q6-4 12 0v10q-6-3-12 0zM6 10l-4 3 2 3-2 4 6-2v-3M18 10l4 3-2 3 2 4-6-2v-3', 'M6 9q6 3 12 0v10q-6 4-12 0zM6 15l-4 1 2-5-2-6 6 4v1M18 15l4 1-2-5 2-6-6 4v1',
    'M6 18V4q0-3 3-2h12q3 3-1 5h-2v13q0 2-2 2H4q-4-3 2-4M18 7H9V4M6 18v4', 'M6 6h11V4q2-4 4 0v16H7q-2 4-4 0V8q0-3 3-2v14M21 6h-4',
    'M2 5c7-5 13 5 20-1v15c-7 5-13-5-20 1z', 'M2 4c3 3 5 2 7 0 2 3 4 3 6 0 2 2 4 3 7 0v16c-3 3-5 2-7-1-2 3-4 3-6 0-2 3-4 4-7 1z']],
  ['标注', [
    'M2 4h20v14H12l-4 4v-4H2z', 'M6 4h12q4 0 4 4v6q0 4-4 4h-6l-4 4v-4H6q-4 0-4-4V8q0-4 4-4z', 'M9 19C-2 16 1 3 12 3s14 12 2 16l-6 4z',
    'M5 7c1-4 6-4 7-3 4-3 8 0 8 3 4 2 2 6 0 7 1 4-5 5-7 4l-5 4-1-4c-4 0-5-3-4-5-3-2 0-6 2-6z',
    'M10 2.500h13v18H10zM2 23l8-11', 'M10 2.500h13v18H10zM2 23l4-12h4', 'M10 1.500h13v18H10zM10 9H2v7l6 7',
    '<path class="tint" d="M13 2.500h9v19h-9z"/><path d="M10 2v20M2 23l8-11"/>', '<path class="tint" d="M13 2.500h9v19h-9z"/><path d="M10 2v20M2 23l4-12h4"/>', '<path class="tint" d="M13 1.500h9v19h-9z"/><path d="M10 1v18M10 10H2v6l6 7"/>',
    '<path class="tint" d="M9 2.500h14v19H9z"/><path d="M2 23l9-12"/>', '<path class="tint" d="M9 2.500h14v19H9z"/><path d="M2 23l4-12h5"/>', '<path class="tint" d="M9 1.500h14v19H9z"/><path d="M10 9H2v7l6 7"/>',
    '<path class="pale" d="M14 2.500h8v18h-8z"/><path d="M10 2v20M2 23l8-11"/>', '<path class="pale" d="M14 2.500h8v18h-8z"/><path d="M10 2v20M2 23l4-12h4"/>', '<path class="pale" d="M14 1.500h8v18h-8z"/><path d="M10 1v18M10 10H2v6l6 7"/>']],
  ['动作按钮', [
    BEVEL + 'M14 8v8l-5-4z', BEVEL + 'M10 8v8l5-4z', BEVEL + 'M9 8v8M15 8v8l-4-4z', BEVEL + 'M15 8v8M9 8v8l4-4z',
    FRAME + 'M12 6l6 5v7H6v-7zM12 14v1', '<path d="M1.500 2.500h21v19h-21z"/><path stroke-width="2.500" d="M12 6v2M10 11h2.500v6M9 18h6"/>', FRAME + 'M8 12v2c0 6 8 6 7 0V9h2l-3-4-3 4h2v5c0 2-2 2-2 0v-2z',
    FRAME + 'M5 8h9v8H5zM14 12l5-4v8zM7 11h2', FRAME + 'M7 6h6l4 5v7H7zM13 6v5h4', FRAME + 'M5 10h3l5-4v12l-5-4H5zM16 8l3-1M16 12h3M16 16l3 1',
    '<path d="M1.500 2.500h21v19h-21z"/><path stroke-width="2.500" d="M8.500 9c0-5 8-4 6.500 0-1 2-3 2-3 5M12 16.500v2"/>', FRAME + 'M4 4.500h15v13H4zM1.500 2.500L4 4.500M22.500 21.500l-3.500-4']]
];

const hint = '<svg class="pointer" viewBox="0 0 70 78"><path d="M68 1L12 63 6 60 1 77l24-6-6-3 22-29z"/></svg><span class="tip">直角三角形</span>';

document.getElementById('gallery-groups').innerHTML = groups.map(([name, items]) =>
  `<section><h3>${name}</h3><div class="shapes">` + items.map((s, i) => {
    const hot = name === '基本形状' && i === 4;
    return `<button class="shape${hot ? ' hot' : ''}"><svg class="i24" viewBox="0 0 24 24">${s[0] === '<' ? s : path(s)}</svg>${hot ? hint : ''}</button>`;
  }).join('') + '</div></section>').join('');
```
FILE: styles.css
```css
* { box-sizing: border-box; }
body {
  margin: 0; min-height: 100vh; padding: 26px 15px; display: flex; position: relative;
  background: #f6f8fa; color: #555; font: 16px/20px "Open Sans", "Noto Sans CJK SC", sans-serif; overflow-x: hidden;
}
button { border: 0; padding: 0; margin: 0; background: none; color: inherit; font: inherit; display: flex; align-items: center; white-space: nowrap; }
a { color: inherit; text-decoration: none; }
h2, h3, p { margin: 0; font-weight: 400; }
svg { display: block; flex: none; fill: none; stroke: #505050; stroke-width: 1.5; overflow: visible; }
.defs { position: absolute; width: 0; height: 0; }
.defs pattern path { stroke: none; }
.defs #cells path { stroke: #aca7a3; stroke-width: 1.7; }
.defs rect { stroke: none; }
#four rect { stroke: #505050; }
.o { stroke: #dd8a55; }
.g { stroke: #8a8a8a; }
.b { stroke: #5b8ee0; }
.i14 { width: 14px; height: 14px; }
.i18 { width: 18px; height: 18px; }
.i20 { width: 20px; height: 20px; }
.i22 { width: 22px; height: 22px; }
.i24 { width: 24px; height: 24px; }
.i26 { width: 26px; height: 26px; }
.caret { width: 0; height: 0; border: 4px solid transparent; border-top: 5px solid #8c8c8c; border-bottom: 0; }
.caret.flip { border-top: 0; border-bottom: 5px solid #666; }

.window { flex: 1; min-width: 0; display: flex; flex-direction: column; background: #f4f4f4; box-shadow: 0 2px 8px rgba(60, 70, 80, .14); }
.doc-tabs { display: flex; height: 2px; }
.doc-tab { width: 506px; background: #d9deea; }
.doc-tab.current { width: 99px; background: #7b9ae6; }
.doc-gap { width: 340px; }
.doc-rest { flex: 1; background: #d9deea; }

.menu-bar { display: flex; align-items: center; height: 51px; padding: 0 20px; }
.file-menu { gap: 8px; height: 32px; padding-right: 15px; border-right: 1px solid #d6d6d6; color: #444; }
.quick { display: flex; gap: 12px; margin-left: 12px; width: 251px; }
.quick .undo { gap: 2px; }
.faint { opacity: .4; }
.tabs { display: flex; gap: 10px; }
.tabs a { padding: 4px 13px; border-radius: 14px; color: #444; white-space: nowrap; }
.tabs .wide { padding: 4px 16px; }
.tabs .dark { color: #222; }
.tabs .on { background: #e87c4b; color: #fff; font-weight: 700; }
.search { margin-left: 27px; gap: 1px; }
.account { margin-left: auto; display: flex; align-items: center; gap: 16px; color: #444; }
.account button { gap: 5px; }
.account .bar { width: 1px; height: 27px; background: #ddd; margin-left: -4px; }
.account .dots { margin-right: -2px; margin-left: -4px; }

.tools { display: flex; height: 89px; padding: 1px 0 3px 4px; border-bottom: 1px solid #d6d6d6; box-shadow: 0 2px 3px rgba(0, 0, 0, .05); position: relative; z-index: 2; }
.group { display: flex; align-items: flex-start; gap: 1px; padding: 1px 5px 0; border-right: 1px solid #e1e1e1; }
.group:first-child { padding-right: 8px; }
.big { flex-direction: column; gap: 8px; padding: 4px 7px 3px; border-radius: 5px; }
.big svg { width: 32px; height: 32px; }
.big span { display: flex; gap: 4px; }
.big .caret { margin-top: 5px; }
.big.pressed { background: #b7b7b7; color: #666; }
.svg-3d { font: 14px "Open Sans", sans-serif; fill: #dd8a55; stroke: none; }
.cluster { display: flex; gap: 2px; margin: 0 3px 0 8px; }
.small-grid { display: grid; grid-template-columns: auto auto; gap: 16px 14px; margin: 8px 7px 0; }
.small-grid.charts { column-gap: 12px; margin-right: 0; margin-left: 9px; }
.small { gap: 5px; height: 20px; }

.menu-anchor { position: relative; }
.gallery {
  position: absolute; left: 0; top: 68px; width: 574px; padding: 2px 2px 5px; background: #fff;
  border: 1px solid #a9a9a9; box-shadow: 2px 3px 8px rgba(0, 0, 0, .3); color: #566484;
}
.gallery h2 { padding: 7px 8px 8px; margin-bottom: 6px; background: #f1f3f5; font-size: 16px; font-weight: 700; color: #4f5d7c; }
.gallery h3 { display: flex; align-items: center; padding-left: 8px; font-size: 16px; line-height: 24px; }
.gallery h3::after { content: ""; flex: 1; height: 2px; background: #ececec; }
#gallery-groups { border-bottom: 2px solid #dadada; }
.gallery section { padding-bottom: 12px; }
.gallery section:last-child { padding-bottom: 6px; }
.shapes { display: grid; grid-template-columns: repeat(17, 1fr); grid-auto-rows: 33px; padding: 0 7px 0 5px; margin-top: 9px; }
.shape { justify-content: center; position: relative; }
.shape svg { stroke: #7d9ad8; stroke-width: 1.5; position: relative; }
.shape text { font: 700 10px "Liberation Mono", monospace; text-anchor: middle; fill: #7d9ad8; stroke: none; }
.shape .tint { fill: #b9c9eb; stroke: none; }
.shape .pale { fill: #dbe4f6; }
.hot { background: linear-gradient(#e4e4e4, #e4e4e4) center / 29px 29px no-repeat; }
.shape .pointer { position: absolute; left: 26px; top: -59px; width: 70px; height: 78px; z-index: 3; fill: #f83a3a; stroke: none; }
.tip { position: absolute; left: 3px; top: 41px; z-index: 3; padding: 6px 12px 7px; background: #fff; border: 1px solid #aaa; box-shadow: 3px 3px 2px rgba(0, 0, 0, .35); color: #555; }

.work { flex: 1; display: grid; grid-template-columns: 324px 1fr 60px; background: #e7e7e7; }
.slides { display: flex; flex-direction: column; border-right: 1px solid #d8d8d8; }
.slides-head { display: flex; align-items: center; padding: 16px 9px; }
.fold svg { stroke: #888; }
.outline { margin-left: 81px; margin-right: 18px; color: #444; }
.thumbs { padding: 4px 15px; border-radius: 14px; background: #a3a3a3; color: #fff; }
.thumb-row { display: flex; gap: 9px; padding-left: 24px; }
.num { padding-top: 10px; color: #dc6b2b; font: 18px/20px "Liberation Serif", serif; width: 7px; }
.thumb { width: 271px; padding: 2px; border: 3px solid #d9692a; border-radius: 5px; background: #f4f4f4; }
.thumb svg { width: 100%; height: auto; }
.add { margin: auto auto 12px 149px; }

.main { display: flex; flex-direction: column; min-width: 0; }
.stage-row { flex: 1; display: flex; }
.stage { flex: 1; padding: 55px 214px 56px 168px; }
.slide { position: relative; aspect-ratio: 4 / 3; outline: 1px solid #777; box-shadow: 0 0 10px rgba(0, 0, 0, .3); }
.art { width: 100%; height: 100%; }
.knob { position: absolute; width: 16px; height: 16px; margin: -8px; border-radius: 50%; border: 2px solid #6b6b6b; background: #fff; }
.tl, .tc, .tr { top: 0; }
.bl, .bc, .br { top: 100%; }
.mr { top: 50%; }
.tl, .bl { left: 0; }
.tc, .bc { left: 50%; }
.tr, .mr, .br { left: 100%; }
.stem { position: absolute; left: 50%; top: -30px; width: 1px; height: 30px; background: #777; }
.spin { position: absolute; left: 50%; top: -48px; margin-left: -13px; width: 26px; height: 26px; padding: 4px; border-radius: 50%; background: #8c8c8c; }
.pic-tools { position: absolute; left: calc(100% + 17px); top: 2px; display: flex; flex-direction: column; align-items: center; gap: 15px; }
.pic-tools button { width: 38px; height: 38px; justify-content: center; background: #fff; border: 1px solid #d9d9d9; box-shadow: 3px 3px 4px rgba(0, 0, 0, .15); }
.pic-tools .round { width: 24px; height: 24px; margin-bottom: -3px; border: 1px solid #c2c2c2; border-radius: 50%; background: #fafafa; box-shadow: none; }

.scroll { width: 20px; display: flex; flex-direction: column; align-items: center; background: #dedede; border-right: 1px solid #d2d2d2; padding-top: 14px; }
.up { border: 4px solid transparent; border-top: 0; border-bottom: 5px solid #888; }
.scroll-foot { margin-top: auto; padding-bottom: 9px; display: flex; flex-direction: column; align-items: center; gap: 13px; }
.scroll-foot svg { fill: #bdbdbd; stroke: none; }
.down { border: 4px solid transparent; border-bottom: 0; border-top: 5px solid #777; }
.corner { width: 100%; height: 19px; background: #d8d8d8; }
.notes { display: flex; align-items: center; gap: 7px; height: 36px; padding-left: 7px; border-top: 1px solid #d0d0d0; border-right: 1px solid #d2d2d2; }
.notes input { flex: 1; border: 0; padding: 0; background: none; font: inherit; font-size: 18px; line-height: 24px; height: 28px; outline: 0; }
.notes input::placeholder { color: #6a6a6a; opacity: 1; }

.side { display: flex; flex-direction: column; align-items: center; padding: 14px 4px 13px; gap: 27px; }
.grip { width: 22px; height: 6px; border: solid #c8c8c8; border-width: 2px 0; margin-bottom: 1px; }
.side .apps { margin-top: auto; border-top: 2px solid #dcdcdc; padding-top: 25px; width: 100%; justify-content: center; }

.status { display: flex; align-items: center; height: 44px; position: relative; border-top: 1px solid #e2e2e2; padding-right: 21px; }
.cell { padding: 6px 17px 6px 15px; border-right: 1px solid #e0e0e0; }
.beautify { gap: 9px; margin-left: 801px; }
.views { display: flex; align-items: center; margin-left: auto; gap: 9px; }
.views button { gap: 3px; }
.views .remarks { margin-right: -3px; }
.views .reading { margin-left: 3px; }
.views .play-more { margin-left: -3px; }
.views .picked { width: 32px; height: 32px; justify-content: center; background: #c4c4c4; border-radius: 5px; }
.views .play { width: 43px; height: 32px; justify-content: center; margin-left: 12px; background: #fb7857; border-radius: 5px; }
.views .zoom { margin: 0 9px; color: #777; gap: 5px; }
.views input { appearance: none; width: 188px; height: 18px; margin: 0 5px; background: linear-gradient(#999, #999) center / 100% 1px no-repeat; }
.views input::-webkit-slider-thumb { appearance: none; width: 17px; height: 17px; border: 2px solid #555; border-radius: 50%; background: #f0f0f0; }
.fit { margin-left: 9px; }

.meter { position: absolute; right: 23px; top: 672px; z-index: 4; display: flex; align-items: center; }
.rates { width: 98px; height: 57px; padding: 0 0 0 13px; margin-right: -18px; border-radius: 28px 0 0 28px; background: #31343f; box-shadow: 0 0 8px rgba(0, 0, 0, .35); font: 14px/28px Roboto, sans-serif; color: #9a9da6; }
.rates p { display: flex; align-items: center; }
.rates p + p { border-top: 1px solid #3b3e49; }
.rates b { margin-left: 17px; margin-right: 1px; font-size: 16px; color: #e2e2e6; }
.dial { display: grid; width: 82px; height: 82px; border-radius: 50%; background: linear-gradient(#5a6070, #4a4e5b); box-shadow: 0 0 6px rgba(0, 0, 0, .45); color: #d9dbe0; }
.dial > * { grid-area: 1 / 1; }
.pct { place-self: center; font: 300 34px/40px Roboto, sans-serif; }
.pct small { font-size: 15px; font-weight: 400; }
.edge-tab { position: absolute; right: 0; top: 770px; width: 5px; height: 87px; background: #4a4e5b; border-radius: 4px 0 0 4px; }

.watermark { position: absolute; right: 99px; bottom: 39px; width: 370px; height: 180px; z-index: 3; pointer-events: none; stroke: none; filter: drop-shadow(0 0 1px #777); }
.wm-fill { fill: #fff; opacity: .85; }
.wm-latin { font: 700 76px "Liberation Sans", sans-serif; stroke: #fff; stroke-width: 2; }
.wm-cjk { font: 900 60px "Noto Sans CJK SC", sans-serif; }
.wm-url { font: 41px "Open Sans", sans-serif; }
.wm-du { font: 700 50px "Liberation Sans", sans-serif; fill: #f0f0f0; stroke: #b5b5b5; stroke-width: 2; }
```
